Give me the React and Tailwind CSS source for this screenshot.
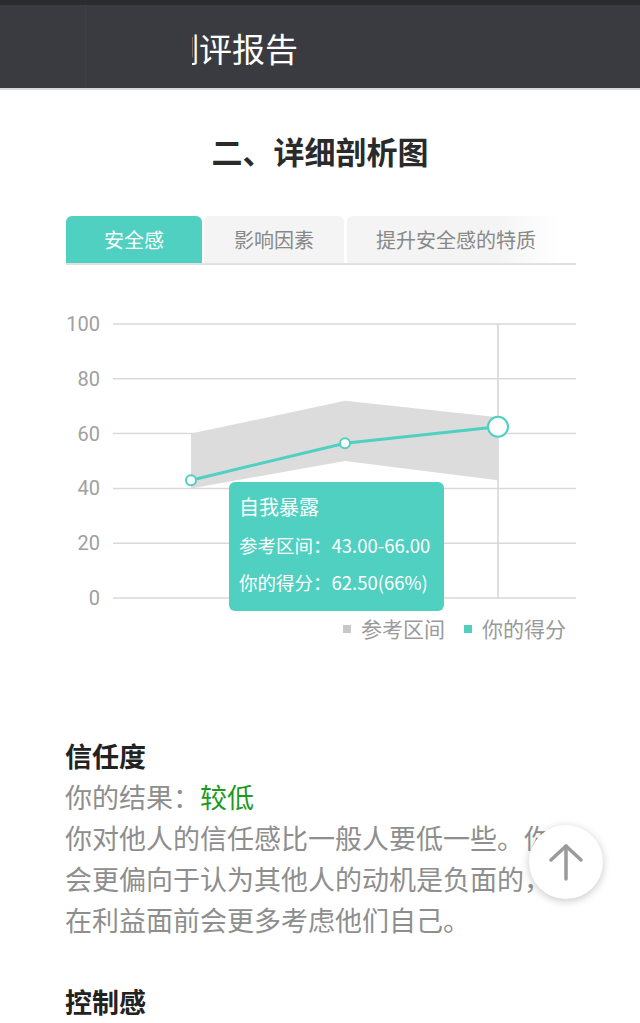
import React from "react";

const TEAL = "#4fd0c1";

// y position for a score on the 0–100 axis
const yOf = (v) => 319 - v * 2.74;

function ScoreChart() {
  const grid = [100, 80, 60, 40, 20, 0];
  const xs = [191, 345, 498];
  const band = [
    [60, 40],
    [72, 50],
    [66, 43],
  ];
  const score = [43, 56.5, 62.5];
  const bandPts =
    xs.map((x, i) => `${x},${yOf(band[i][0])}`).join(" ") +
    " " +
    xs
      .map((x, i) => `${x},${yOf(band[i][1])}`)
      .reverse()
      .join(" ");
  const linePts = xs.map((x, i) => `${x},${yOf(score[i])}`).join(" ");

  return (
    <div className="relative h-[380px] w-[640px]">
      <svg width="640" height="380" viewBox="0 0 640 380" className="block">
        {grid.map((g) => (
          <g key={g}>
            <line x1="113" x2="576" y1={yOf(g)} y2={yOf(g)} stroke="#d9d9d9" strokeWidth="1.5" />
            <text
              x="100"
              y={yOf(g) + 7}
              textAnchor="end"
              fontSize="20"
              fill="#a0a0a0"
              fontFamily="Roboto, 'Noto Sans', sans-serif"
            >
              {g}
            </text>
          </g>
        ))}
        <line x1="498" x2="498" y1={yOf(100)} y2={yOf(0)} stroke="#d4d4d4" strokeWidth="1.5" />
        <polygon points={bandPts} fill="#dcdcdc" />
        <polyline points={linePts} fill="none" stroke={TEAL} strokeWidth="3" />
        <circle cx={xs[0]} cy={yOf(score[0])} r="5" fill="#fff" stroke={TEAL} strokeWidth="2" />
        <circle cx={xs[1]} cy={yOf(score[1])} r="5" fill="#fff" stroke={TEAL} strokeWidth="2" />
        <circle cx={xs[2]} cy={yOf(score[2])} r="10" fill="#fff" stroke={TEAL} strokeWidth="2" />

        {/* legend */}
        <rect x="343" y="346" width="8" height="8" fill="#c8c8c8" />
        <text x="361" y="358" fontSize="21" fill="#9a9a9a" fontFamily="'Noto Sans CJK SC', sans-serif">
          参考区间
        </text>
        <rect x="464" y="346" width="8" height="8" fill={TEAL} />
        <text x="482" y="358" fontSize="21" fill="#9a9a9a" fontFamily="'Noto Sans CJK SC', sans-serif">
          你的得分
        </text>
      </svg>

      {/* hover tooltip */}
      <div className="absolute left-[229px] top-[203px] flex h-[129px] w-[215px] flex-col rounded-[6px] bg-[#4fd0c1] px-[10px] pt-[12px] text-white">
        <div className="text-[20px] leading-[26px]">自我暴露</div>
        <div className="mt-[12px] whitespace-nowrap text-[18.5px] leading-[26px]">参考区间：43.00-66.00</div>
        <div className="mt-[11px] whitespace-nowrap text-[18.5px] leading-[26px]">你的得分：62.50(66%)</div>
      </div>
    </div>
  );
}

export default function App() {
  return (
    <div
      className="relative h-[1023px] w-[640px] overflow-hidden bg-white"
      style={{ fontFamily: "'Noto Sans CJK SC', 'Noto Sans', sans-serif" }}
    >
      {/* status strip */}
      <div className="h-[5px] bg-[#2b2c30]" />
      {/* app bar */}
      <div className="flex h-[83px] items-center bg-[#3a3b40]">
        <div className="h-full w-[86px] border-r border-[#3f4045]" />
        <div className="ml-[106px] flex items-center whitespace-nowrap pt-[3px] text-[33px] leading-none text-white">
          <div className="flex w-[7px] justify-end overflow-hidden">
            <span>测</span>
          </div>
          <span>评报告</span>
        </div>
      </div>
      <div className="h-[2px] bg-[#d8d8d8]" />

      {/* section title */}
      <div className="mt-[41px] text-center text-[31px] font-bold leading-[40px] text-[#2a2a2a]">
        二、详细剖析图
      </div>

      {/* tabs */}
      <div className="ml-[66px] mr-[64px] mt-[45px] flex h-[49px] border-b-2 border-[#e2e2e2] text-[20px]">
        <div className="flex w-[136px] items-center justify-center rounded-t-[6px] bg-[#4fd0c1] text-white">
          安全感
        </div>
        <div className="ml-[2px] flex w-[140px] items-center justify-center rounded-t-[6px] bg-[#f4f4f4] text-[#888]">
          影响因素
        </div>
        <div className="ml-[3px] flex w-[213px] items-center justify-start whitespace-nowrap rounded-t-[6px] bg-gradient-to-r from-[#f4f4f4] from-70% to-white pl-[29px] text-[#888]">
          提升安全感的特质
        </div>
      </div>

      <div className="mt-[14px]">
        <ScoreChart />
      </div>

      {/* result text */}
      <div className="mt-[76px] px-[65px] text-[27px] leading-[41px]">
        <div className="font-bold text-[#222]">信任度</div>
        <div className="text-[#8e8e8e]">
          你的结果：<span className="text-[#1f991f]">较低</span>
        </div>
        <p className="whitespace-nowrap text-[#8e8e8e]">
          你对他人的信任感比一般人要低一些。你
          <br />
          会更偏向于认为其他人的动机是负面的，
          <br />
          在利益面前会更多考虑他们自己。
        </p>
        <div className="mt-[41px] font-bold text-[#222]">控制感</div>
      </div>

      {/* back-to-top button */}
      <button className="absolute left-[529px] top-[825px] flex h-[74px] w-[74px] items-center justify-center rounded-full bg-white shadow-[0_2px_8px_rgba(0,0,0,0.22)]">
        <svg width="36" height="40" viewBox="0 0 36 40" fill="none" stroke="#9a9a9a" strokeWidth="3.5" strokeLinecap="round" strokeLinejoin="round">
          <path d="M18 37V4" />
          <path d="M3 18L18 4l15 14" />
        </svg>
      </button>
    </div>
  );
}
